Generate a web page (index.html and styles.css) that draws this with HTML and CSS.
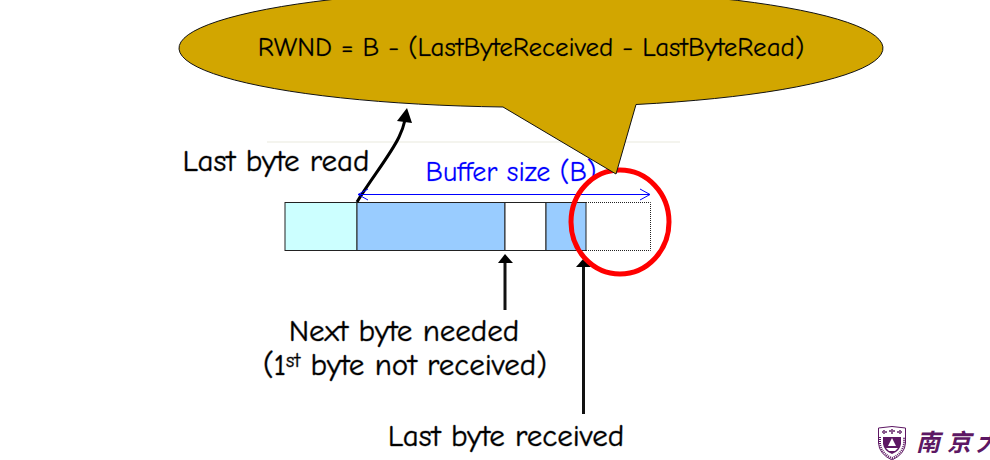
FILE: index.html
```html
<!DOCTYPE html>
<html lang="en">
<head>
<meta charset="utf-8">
<title>Receive window</title>
<link rel="stylesheet" href="styles.css">
</head>
<body>
<main>
<svg class="diagram" viewBox="0 0 990 460" role="img" aria-label="TCP receive buffer and window">
  <path class="rule" d="M267 142H680"/>

  <!-- buffer segments -->
  <rect class="segment read" x="285" y="202.500" width="72" height="48"/>
  <rect class="segment held" x="357" y="202.500" width="148" height="48"/>
  <rect class="segment gap" x="505" y="202.500" width="41" height="48"/>
  <rect class="segment held" x="546" y="202.500" width="40" height="48"/>
  <path class="free" d="M586 202.500H650.500V250.500H586"/>

  <!-- pointers -->
  <path class="curve" d="M357 202C371 179 391 154 399 137Q403 129 405 120"/>
  <path class="head" d="M407 108L397 121L412 123Z"/>
  <path class="stem" d="M505 262V310"/>
  <path class="head" d="M505 254L498 263H513Z"/>
  <path class="stem" d="M583.500 266V414"/>
  <path class="head" d="M584 258L576 267H591Z"/>

  <path class="span" d="M358 194.500H650"/>
  <path class="span" d="M368 189L358 194.500L368 200M640 189L650 194.500L640 200"/>

  <text class="label" x="276" y="171">Last byte read</text>
  <text class="label size" x="511" y="181">Buffer size (B)</text>
  <text class="label" x="404" y="341">Next byte needed</text>
  <text class="label" x="405" y="375">(1<tspan class="sup" dy="-8">st</tspan><tspan dy="8"> byte not received)</tspan></text>
  <text class="label" x="506" y="446">Last byte received</text>

  <ellipse class="ring" cx="620" cy="222" rx="49" ry="52"/>
  <path class="callout" d="M503 107A352 59 0 1 1 636 104.500L616 174Z"/>
  <text class="label formula" x="531" y="56">RWND = B - (LastByteReceived - LastByteRead)</text>

  <!-- university crest -->
  <g class="crest">
    <path class="shield" d="M878.500 428Q892 425 905.500 428V443Q905 454 892 460Q879 454 878.500 443Z"/>
    <path class="field" d="M883 437H901V444Q900 451 892 454Q884 451 883 444Z"/>
    <path class="motif" d="M892 438L894 442L896 446H888L890 442ZM886 448H898L895 451H889Z"/>
    <path class="dots" d="M882 432H887M889 431H895M897 432H902M884 430V434M892 429V434M900 430V434"/>
    <path class="motto" d="M880 437V444Q882 454 892 458Q902 454 904 444V437"/>
  </g>
  <text class="name" lang="zh" x="916 947 976" y="451">南京大</text>
</svg>
</main>
</body>
</html>
```
FILE: styles.css
```css
body {
  margin: 0;
  background: #fff;
}

.diagram {
  display: block;
  width: 100%;
  height: auto;
}

.rule { stroke: #f4f4ee; stroke-width: 2; }

.segment { stroke: #222; stroke-width: 1; }
.read { fill: #cff; }
.held { fill: #9cf; }
.gap { fill: #fff; }
.free { fill: none; stroke: #222; stroke-dasharray: 1 1; }

.curve { fill: none; stroke: #000; stroke-width: 3; }
.stem { stroke: #111; stroke-width: 3; }
.head { fill: #000; }
.span { fill: none; stroke: #00f; stroke-width: 1; }

.label {
  font-family: "Comic Sans MS", "Comic Neue", Lato, sans-serif;
  font-size: 31px;
  font-variant-ligatures: none;
  text-anchor: middle;
  fill: #000;
  stroke: #000;
  stroke-width: 1px;
  stroke-opacity: 40%;
}
.size { font-size: 28px; fill: #00f; stroke: #00f; stroke-opacity: 20%; }
.formula { font-size: 27px; stroke-opacity: 20%; }
.sup { font-size: 20px; }

.ring { fill: none; stroke: #f00; stroke-width: 5; }
.callout { fill: #d2a600; stroke: #111; stroke-width: 1; }

.shield { fill: #fff; stroke: #5d1763; stroke-width: 1; }
.field, .name { fill: #5d1763; }
.motif { fill: #fff; }
.dots { stroke: #8a5a8e; stroke-width: 2; }
.motto { fill: none; stroke: #5d1763; stroke-width: 2; stroke-dasharray: 1 1; }
.name {
  font-family: "Noto Sans CJK SC", sans-serif;
  font-size: 24px;
  font-style: italic;
  font-weight: 700;
}
```
